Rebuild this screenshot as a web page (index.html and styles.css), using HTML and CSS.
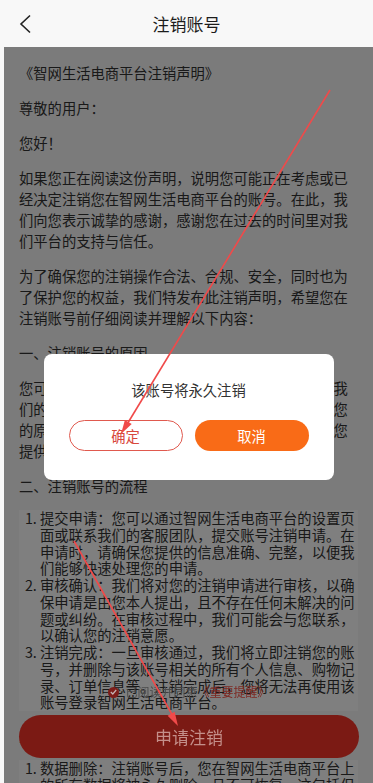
FILE: index.html
```html
<!DOCTYPE html>
<html lang="zh-CN">
<head>
  <meta charset="UTF-8">
  <title>注销账号</title>
  <link rel="stylesheet" href="styles.css">
</head>
<body>
  <div class="header">
    <svg class="back" width="14" height="20" viewBox="0 0 14 20"><polyline points="11,1.5 2,10 11,18.5" fill="none" stroke="#222" stroke-width="1.6"/></svg>
    <h1>注销账号</h1>
  </div>

  <!-- 声明内容 -->
  <div class="content">
    <p>《智网生活电商平台注销声明》</p>
    <p>尊敬的用户：</p>
    <p>您好！</p>
    <p>如果您正在阅读这份声明，说明您可能正在考虑或已经决定注销您在智网生活电商平台的账号。在此，我们向您表示诚挚的感谢，感谢您在过去的时间里对我们平台的支持与信任。</p>
    <p>为了确保您的注销操作合法、合规、安全，同时也为了保护您的权益，我们特发布此注销声明，希望您在注销账号前仔细阅读并理解以下内容：</p>
    <p>一、注销账号的原因</p>
    <p>您可能会出于各种原因决定注销账号，例如您认为我们的产品或服务已经不能满足您的实际需求。无论您的原因是什么，我们都尊重您的选择，并希望能为您提供更好的服务。</p>
    <p>二、注销账号的流程</p>
    <ol class="steps">
      <li>提交申请：您可以通过智网生活电商平台的设置页面或联系我们的客服团队，提交账号注销申请。在申请时，请确保您提供的信息准确、完整，以便我们能够快速处理您的申请。</li>
      <li>审核确认：我们将对您的注销申请进行审核，以确保申请是由您本人提出，且不存在任何未解决的问题或纠纷。在审核过程中，我们可能会与您联系，以确认您的注销意愿。</li>
      <li>注销完成：一旦审核通过，我们将立即注销您的账号，并删除与该账号相关的所有个人信息、购物记录、订单信息等。注销完成后，您将无法再使用该账号登录智网生活电商平台。</li>
    </ol>
    <p>三、注销账号的影响</p>
    <ol class="steps">
      <li>数据删除：注销账号后，您在智网生活电商平台上的所有数据将被永久删除，且不可恢复。这包括但不限于个人信息、订单记录、收藏等。</li>
      <li>权益失效：账号中未使用的优惠券、积分等权益将一并失效。</li>
    </ol>
  </div>

  <!-- 底部操作 -->
  <div class="footer">
    <div class="agree">
      <span class="check"><svg width="7" height="6" viewBox="0 0 7 6"><polyline points="0.8,3 2.8,5 6.2,1" fill="none" stroke="#c4b4b4" stroke-width="1.2"/></svg></span>
      <span class="agree-text">已阅读并同意</span><span class="agree-link">《重要提醒》</span>
    </div>
    <button class="submit">申请注销</button>
  </div>

  <!-- 弹窗 -->
  <div class="mask">
    <div class="dialog">
      <div class="dialog-title">该账号将永久注销</div>
      <div class="dialog-btns">
        <button class="btn-ok">确定</button>
        <button class="btn-cancel">取消</button>
      </div>
    </div>
  </div>

  <!-- 标注箭头 -->
  <svg class="marks" width="373" height="783" viewBox="0 0 373 783">
    <line x1="330" y1="90" x2="126" y2="426" stroke="#f04a4a" stroke-width="1.6"/>
    <polygon points="121,434 131.7,424.1 124.9,419.9" fill="#f04a4a"/>
    <line x1="74" y1="541" x2="174" y2="718" stroke="#f04a4a" stroke-width="1.6"/>
    <polygon points="178,726 174.6,711.8 167.6,715.8" fill="#f04a4a"/>
  </svg>
</body>
</html>
```

FILE: styles.css
```css
body {
  margin: 0;
  background-color: #f8f8f8;
  font-family: "Noto Sans CJK SC", "Noto Sans", sans-serif;
  color: #333;
}

.header {
  position: relative;
  height: 47px;
  display: flex;
  align-items: center;
  justify-content: center;
  background-color: #f8f8f8;
}

.header h1 {
  margin: 0;
  font-size: 17px;
  font-weight: 400;
  color: #1c1c1c;
}

.back {
  position: absolute;
  left: 19px;
  top: 14px;
}

.content {
  margin-left: 4px;
  padding: 1px 15px 80px 15px;
  background-color: #f6f6f6;
  font-size: 14.3px;
}

.content p {
  margin: 14px 0;
  line-height: 21px;
}

.steps {
  margin: 14px 0;
  padding: 0 0 0 21px;
  background-color: #fff;
  line-height: 16.75px;
}

.footer {
  position: fixed;
  left: 4px;
  right: 0;
  bottom: 25px;
  z-index: 4;
  padding: 0 14px 0 15px;
}

.agree {
  display: flex;
  align-items: center;
  justify-content: center;
  font-size: 12px;
  line-height: 14px;
  margin-bottom: 16px;
}

.check {
  width: 11px;
  height: 11px;
  border-radius: 50%;
  background-color: #7c1d1a;
  display: flex;
  align-items: center;
  justify-content: center;
  margin-right: 6px;
}

.agree-text {
  color: #4b4b4b;
}

.agree-link {
  color: #7e2822;
}

.submit {
  display: block;
  width: 100%;
  height: 43px;
  border: none;
  border-radius: 22px;
  background-color: #7b1a14;
  color: #c48f8a;
  font-family: inherit;
  font-size: 17px;
}

.mask {
  position: fixed;
  top: 47px;
  left: 4px;
  right: 0;
  bottom: 0;
  z-index: 3;
  background-color: rgba(0, 0, 0, 0.5);
  display: flex;
  align-items: center;
  justify-content: center;
}

.dialog {
  width: 290px;
  margin-top: 4px;
  padding: 26px 0 29px;
  background: #fff;
  border-radius: 8px;
  text-align: center;
}

.dialog-title {
  font-size: 14.3px;
  line-height: 20px;
  color: #333;
}

.dialog-btns {
  display: flex;
  justify-content: center;
  gap: 12px;
  margin-top: 20px;
}

.dialog-btns button {
  width: 114px;
  height: 31px;
  border-radius: 16px;
  font-family: inherit;
  font-size: 14.3px;
  padding: 0;
}

.btn-ok {
  background: #fff;
  border: 1px solid #e0594e;
  color: #d8473c;
}

.btn-cancel {
  background: #f96b17;
  border: none;
  color: #fff;
}

.marks {
  position: fixed;
  left: 0;
  top: 0;
  z-index: 5;
  pointer-events: none;
}
```
